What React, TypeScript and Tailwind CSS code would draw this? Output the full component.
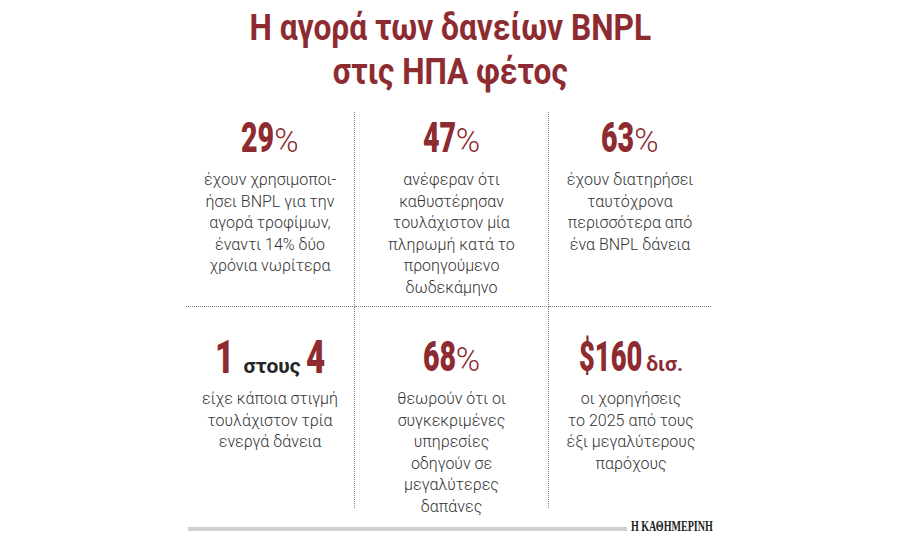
const red = "text-[#8d2b31]";

function Pct({ value }: { value: string }) {
  return (
    <div className="flex justify-center items-baseline h-[42px] leading-[42px]">
      <span className={`inline-block origin-left scale-x-[0.68] -mr-[16px] text-[42px] font-black ${red}`}>{value}</span>
      <span className={`text-[33px] font-light ${red}`}>%</span>
    </div>
  );
}

function Body({ lines }: { lines: string[] }) {
  return (
    <p className="text-center text-[16px] leading-[21.6px] font-light text-[#333333]">
      {lines.map((l, i) => (
        <span key={i} className="block whitespace-nowrap">{l}</span>
      ))}
    </p>
  );
}

export default function App() {
  return (
    <div className="w-[900px] h-[540px] bg-white overflow-hidden font-['Roboto',sans-serif]">
      <h1 className="pt-[7px] text-center">
        <span className={`inline-block scale-x-[0.88] text-[36px] leading-[43.5px] font-bold ${red}`}>
          Η αγορά των δανείων BNPL
          <br />
          στις ΗΠΑ φέτος
        </span>
      </h1>

      <div className="ml-[186px] mt-[18px] grid grid-cols-[169px_194px_164px]">
        {/* row 1 */}
        <div className="h-[195px] pt-[5px] border-r border-b border-dotted border-[#808080]">
          <Pct value="29" />
          <div className="mt-[10px]">
            <Body lines={["έχουν χρησιμοποι-", "ήσει BNPL για την", "αγορά τροφίμων,", "έναντι 14% δύο", "χρόνια νωρίτερα"]} />
          </div>
        </div>
        <div className="h-[195px] pt-[5px] border-r border-b border-dotted border-[#808080]">
          <Pct value="47" />
          <div className="mt-[10px]">
            <Body lines={["ανέφεραν ότι", "καθυστέρησαν", "τουλάχιστον μία", "πληρωμή κατά το", "προηγούμενο", "δωδεκάμηνο"]} />
          </div>
        </div>
        <div className="h-[195px] pt-[5px] border-b border-dotted border-[#808080] mr-[2px]">
          <Pct value="63" />
          <div className="mt-[10px]">
            <Body lines={["έχουν διατηρήσει", "ταυτόχρονα", "περισσότερα από", "ένα BNPL δάνεια"]} />
          </div>
        </div>

        {/* row 2 */}
        <div className="h-[201px] pt-[29px] border-r border-dotted border-[#808080]">
          <div className="flex justify-center items-baseline h-[42px] leading-[42px]">
            <span className={`inline-block origin-left scale-x-[0.72] -mr-[7px] text-[46px] font-black ${red}`}>1</span>
            <span className="ml-[9px] mr-[5px] text-[21px] leading-none font-bold text-[#262626]">στους</span>
            <span className={`inline-block origin-left scale-x-[0.72] -mr-[7px] text-[46px] font-black ${red}`}>4</span>
          </div>
          <div className="mt-[10px]">
            <Body lines={["είχε κάποια στιγμή", "τουλάχιστον τρία", "ενεργά δάνεια"]} />
          </div>
        </div>
        <div className="h-[201px] pt-[29px] border-r border-dotted border-[#808080]">
          <Pct value="68" />
          <div className="mt-[10px]">
            <Body lines={["θεωρούν ότι οι", "συγκεκριμένες", "υπηρεσίες", "οδηγούν σε", "μεγαλύτερες", "δαπάνες"]} />
          </div>
        </div>
        <div className="h-[201px] pt-[29px]">
          <div className="flex justify-center items-baseline h-[42px] leading-[42px]">
            <span className={`inline-block origin-left scale-x-[0.65] -mr-[33px] text-[42px] font-black ${red}`}>$160</span>
            <span className={`ml-[3px] text-[21px] leading-none font-bold ${red}`}>δισ.</span>
          </div>
          <div className="mt-[10px]">
            <Body lines={["οι χορηγήσεις", "το 2025 από τους", "έξι μεγαλύτερους", "παρόχους"]} />
          </div>
        </div>
      </div>

      <div className="ml-[188px] w-[525px] mt-[11px] h-[16px] flex items-center">
        <div className="flex-1 h-[4px] mt-[4px] mr-[5px] bg-[#cfcfcf]" />
        <span className="inline-block origin-right scale-x-[0.72] -ml-[33px] whitespace-nowrap text-[14px] leading-[16px] font-bold text-[#1f1f1f] font-['Liberation_Serif',serif]">
          Η ΚΑΘΗΜΕΡΙΝΗ
        </span>
      </div>
    </div>
  );
}
